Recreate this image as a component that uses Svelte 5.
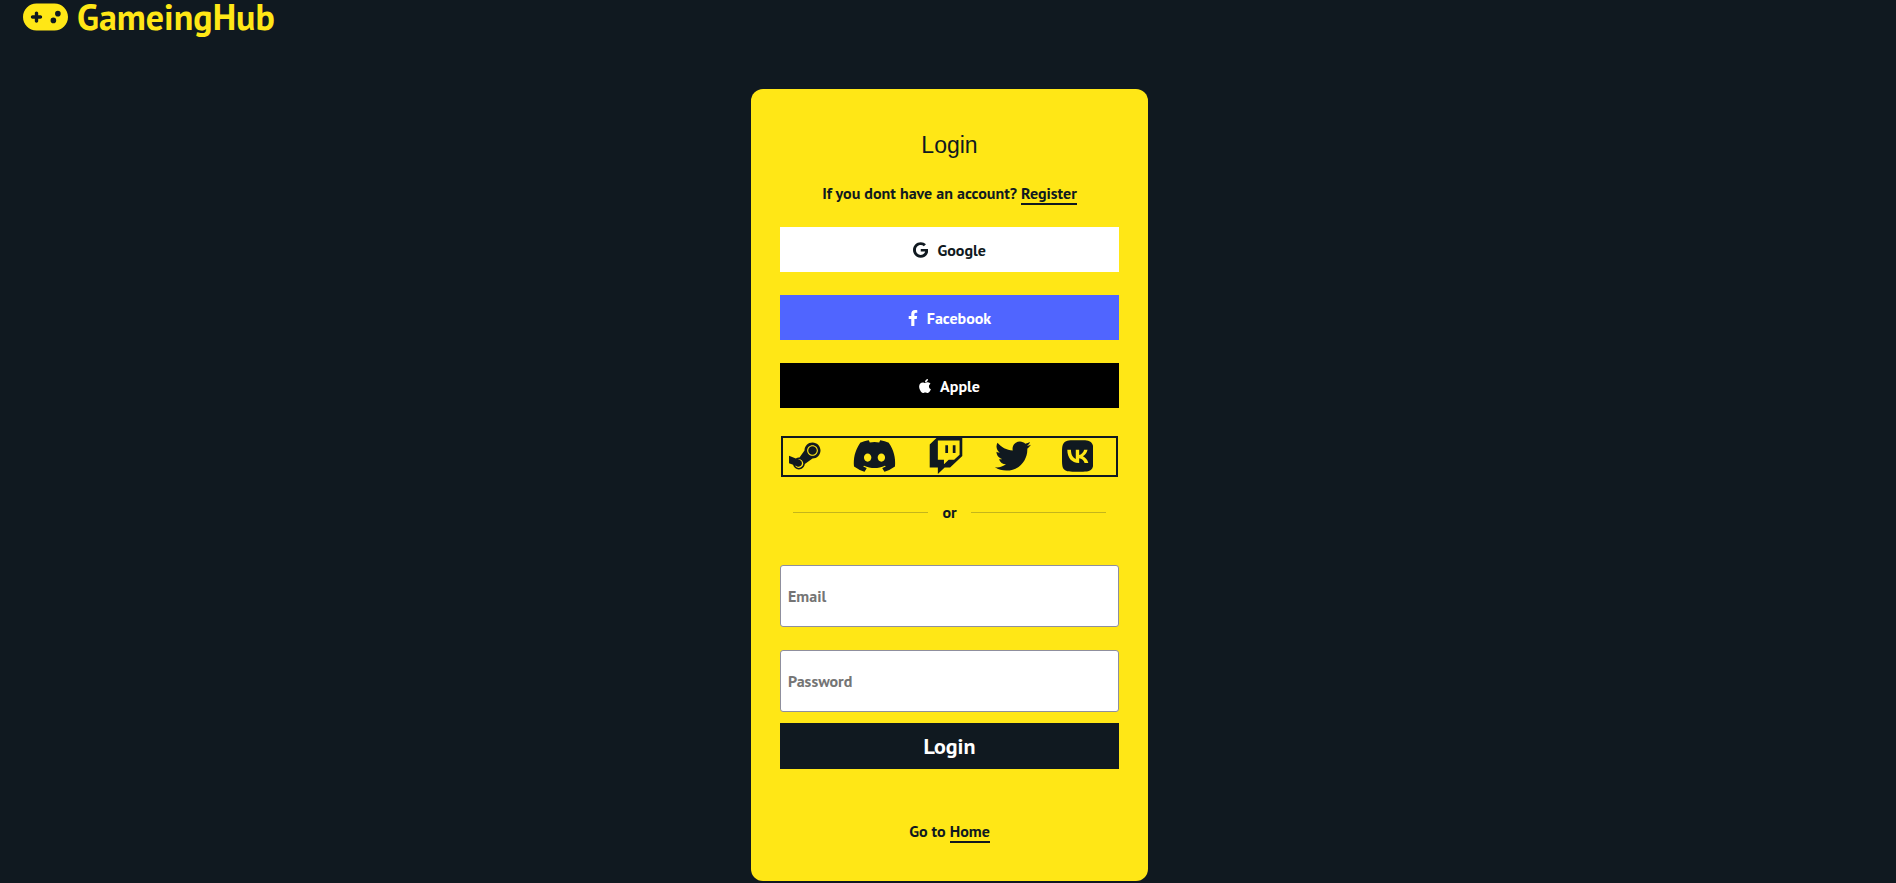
<script>
  const socials = [
    { name: 'Steam', width: 448, path: 'M395.5 177.5c0 33.8-27.5 61-61 61-33.8 0-61-27.3-61-61s27.3-61 61-61c33.5 0 61 27.2 61 61zm52.5.2c0 63-51 113.8-113.7 113.8L225 371.3c-4 43-40.5 76.8-84.5 76.8-40.5 0-74.7-28.8-83-67L0 358V250.7L97.2 290c15.1-9.2 32.2-13.3 52-11.5l71-101.7c.5-62.3 51.5-112.8 114-112.8C397 64 448 115 448 177.7zM203 363c0-34.7-27.8-62.5-62.5-62.5-4.5 0-9 .5-13.5 1.5l26 10.5c25.5 10.2 38 39 27.7 64.5-10.2 25.5-39.2 38-64.7 27.5-10.2-4-20.5-8.3-30.7-12.2 10.5 19.7 31.2 33.2 55.2 33.2 34.7 0 62.5-27.8 62.5-62.5zm207.5-185.3c0-42-34.3-76.2-76.2-76.2-42.3 0-76.5 34.2-76.5 76.2 0 42.2 34.3 76.2 76.5 76.2 41.9.1 76.2-33.9 76.2-76.2z' },
    { name: 'Discord', width: 640, path: 'M524.531,69.836a1.5,1.5,0,0,0-.764-.7A485.065,485.065,0,0,0,404.081,32.03a1.816,1.816,0,0,0-1.923.91,337.461,337.461,0,0,0-14.9,30.6,447.848,447.848,0,0,0-134.426,0,309.541,309.541,0,0,0-15.135-30.6,1.89,1.89,0,0,0-1.924-.91A483.689,483.689,0,0,0,116.085,69.137a1.712,1.712,0,0,0-.788.676C39.068,183.651,18.186,294.69,28.43,404.354a2.016,2.016,0,0,0,.765,1.375A487.666,487.666,0,0,0,176.02,479.918a1.9,1.9,0,0,0,2.063-.676A348.2,348.2,0,0,0,208.12,430.4a1.86,1.86,0,0,0-1.019-2.588,321.173,321.173,0,0,1-45.868-21.853,1.885,1.885,0,0,1-.185-3.126c3.082-2.309,6.166-4.711,9.109-7.137a1.819,1.819,0,0,1,1.9-.256c96.229,43.917,200.41,43.917,295.5,0a1.812,1.812,0,0,1,1.924.233c2.944,2.426,6.027,4.851,9.132,7.16a1.884,1.884,0,0,1-.162,3.126,301.407,301.407,0,0,1-45.89,21.83,1.875,1.875,0,0,0-1,2.611,391.055,391.055,0,0,0,30.014,48.815,1.864,1.864,0,0,0,2.063.7A486.048,486.048,0,0,0,610.7,405.729a1.882,1.882,0,0,0,.765-1.352C623.729,277.594,590.933,167.465,524.531,69.836ZM222.491,337.58c-28.972,0-52.844-26.587-52.844-59.239S193.056,219.1,222.491,219.1c29.665,0,53.306,26.82,52.843,59.239C275.334,310.993,251.924,337.58,222.491,337.58Zm195.38,0c-28.971,0-52.843-26.587-52.843-59.239S388.437,219.1,417.871,219.1c29.667,0,53.307,26.82,52.844,59.239C470.715,310.993,447.538,337.58,417.871,337.58Z' },
    { name: 'Twitch', width: 512, path: 'M391.17,103.47H352.54v109.7h38.63ZM285,103H246.37V212.75H285ZM120.83,0,24.31,91.42V420.58H140.14V512l96.53-91.42h77.25L487.69,256V0ZM449.07,237.75l-77.22,73.12H294.61l-67.6,64v-64H140.14V36.58H449.07Z' },
    { name: 'Twitter', width: 512, path: 'M459.37 151.716c.325 4.548.325 9.097.325 13.645 0 138.72-105.583 298.558-298.558 298.558-59.452 0-114.68-17.219-161.137-47.106 8.447.974 16.568 1.299 25.34 1.299 49.055 0 94.213-16.568 130.274-44.832-46.132-.975-84.792-31.188-98.112-72.772 6.498.974 12.995 1.624 19.818 1.624 9.421 0 18.843-1.3 27.614-3.573-48.081-9.747-84.143-51.98-84.143-102.985v-1.299c13.969 7.797 30.214 12.67 47.431 13.319-28.264-18.843-46.781-51.005-46.781-87.391 0-19.492 5.197-37.36 14.294-52.954 51.655 63.675 129.3 105.258 216.365 109.807-1.624-7.797-2.599-15.918-2.599-24.04 0-57.828 46.782-104.934 104.934-104.934 30.213 0 57.502 12.67 76.67 33.137 23.715-4.548 46.456-13.32 66.599-25.34-7.798 24.366-24.366 44.833-46.132 57.827 21.117-2.273 41.584-8.122 60.426-16.243-14.292 20.791-32.161 39.308-52.628 54.253z' },
    { name: 'VK', width: 448, path: 'M31.4907 63.4907C0 94.9813 0 145.671 0 247.04V264.96C0 366.329 0 417.019 31.4907 448.509C62.9813 480 113.671 480 215.04 480H232.96C334.329 480 385.019 480 416.509 448.509C448 417.019 448 366.329 448 264.96V247.04C448 145.671 448 94.9813 416.509 63.4907C385.019 32 334.329 32 232.96 32H215.04C113.671 32 62.9813 32 31.4907 63.4907ZM75.6 168.267H126.747C128.427 253.76 166.133 289.973 196 297.44V168.267H244.16V242C273.653 238.827 304.64 205.227 315.093 168.267H363.253C359.313 187.435 351.46 205.583 340.186 221.579C328.913 237.574 314.461 251.071 297.733 261.227C316.41 270.499 332.907 283.63 346.132 299.751C359.357 315.873 369.01 334.618 374.453 354.747H321.44C316.555 337.262 306.614 321.61 292.865 309.754C279.117 297.899 262.173 290.368 244.16 288.107V354.747H238.373C136.267 354.747 78.0267 284.747 75.6 168.267Z' }
  ];

  const providers = [
    { name: 'Google', width: 488, path: 'M488 261.8C488 403.3 391.1 504 248 504 110.8 504 0 393.2 0 256S110.8 8 248 8c66.8 0 123 24.5 166.3 64.9l-67.5 64.9C258.5 52.6 94.3 116.6 94.3 256c0 86.5 69.1 156.6 153.7 156.6 98.2 0 135-70.4 140.8-106.9H248v-85.3h236.1c2.3 12.7 3.9 24.9 3.9 41.4z' },
    { name: 'Facebook', width: 320, path: 'M279.14 288l14.22-92.66h-88.91v-60.13c0-25.35 12.42-50.06 52.24-50.06h40.42V6.26S260.43 0 225.36 0c-73.22 0-121.08 44.38-121.08 124.72v70.62H22.89V288h81.39v224h100.17V288z' },
    { name: 'Apple', width: 384, path: 'M318.7 268.7c-.2-36.7 16.4-64.4 50-84.8-18.8-26.9-47.2-41.7-84.7-44.6-35.5-2.8-74.3 20.7-88.5 20.7-15 0-49.4-19.7-76.4-19.7C63.3 141.2 4 184.8 4 273.5q0 39.3 14.4 81.2c12.8 36.7 59 126.7 107.2 125.2 25.2-.6 43-17.9 75.8-17.9 31.8 0 48.3 17.9 76.4 17.9 48.6-.7 90.4-82.5 102.6-119.3-65.2-30.7-61.7-90-61.7-91.9zm-56.6-164.2c27.3-32.4 24.8-61.9 24-72.5-24.1 1.4-52 16.4-67.9 34.9-17.5 19.8-27.8 44.3-25.6 71.9 26.1 2 49.9-11.4 69.5-34.3z' }
  ];
</script>

<header>
  <a class="brand" href="#home">
    <svg viewBox="0 0 640 512" aria-hidden="true"><path d="M192 64C86 64 0 150 0 256S86 448 192 448H448c106 0 192-86 192-192s-86-192-192-192H192zM496 168a40 40 0 1 1 0 80 40 40 0 1 1 0-80zM392 304a40 40 0 1 1 80 0 40 40 0 1 1 -80 0zM168 200c0-13.3 10.7-24 24-24s24 10.7 24 24v32h32c13.3 0 24 10.7 24 24s-10.7 24-24 24H216v32c0 13.3-10.7 24-24 24s-24-10.7-24-24V280H136c-13.3 0-24-10.7-24-24s10.7-24 24-24h32V200z" /></svg>
    <span>GameingHub</span>
  </a>
</header>

<div class="page">
  <main>
    <h1>Login</h1>
    <p>If you dont have an account? <a href="#register">Register</a></p>

    <div class="providers">
      {#each providers as p}
        <button type="button" class={p.name.toLowerCase()}>
          <svg viewBox="0 0 {p.width} 512" aria-hidden="true"><path d={p.path} /></svg>
          {p.name}
        </button>
      {/each}
    </div>

    <nav class="socials">
      {#each socials as s}
        <a href="#{s.name.toLowerCase()}" aria-label={s.name}>
          <svg viewBox="0 0 {s.width} 512" aria-hidden="true"><path d={s.path} /></svg>
        </a>
      {/each}
    </nav>

    <div class="divider">or</div>

    <form onsubmit={(e) => e.preventDefault()}>
      <input type="email" placeholder="Email" aria-label="Email" />
      <input type="password" placeholder="Password" aria-label="Password" />
      <button type="submit">Login</button>
    </form>

    <p class="home">Go to <a href="#home">Home</a></p>
  </main>
</div>

<style>
  :global(body) {
    background: #101920;
    color: #101920;
    font: 700 16px/20px "PT Sans", "Open Sans", sans-serif;
  }
  svg {
    display: block;
    fill: currentColor;
  }
  header {
    display: flex;
    height: 34px;
    padding-left: 23px;
  }
  .brand {
    display: flex;
    align-items: center;
    gap: 9px;
    color: #ffe716;
    font-size: 36px;
    line-height: 34px;
    text-decoration: none;
  }
  .brand svg {
    height: 36px;
  }
  .page {
    padding: 55px 0 2px 3px;
  }
  main {
    box-sizing: border-box;
    width: 397px;
    max-width: 100%;
    margin: 0 auto;
    padding: 40px 29px 38px;
    border-radius: 12px;
    background: #ffe716;
  }
  h1 {
    margin: 0 0 22px;
    font: 400 23px/32px "Liberation Sans", sans-serif;
    text-align: center;
  }
  p {
    margin: 0;
    text-align: center;
  }
  p a {
    display: inline-block;
    border-bottom: 2px solid #101920;
    color: inherit;
    text-decoration: none;
  }
  button {
    display: flex;
    align-items: center;
    justify-content: center;
    gap: 9px;
    width: 100%;
    height: 45px;
    padding: 0;
    border: 0;
    font: inherit;
    cursor: pointer;
  }
  button svg {
    height: 16px;
  }
  .providers {
    display: grid;
    gap: 23px;
    margin: 22px 0 28px;
  }
  .google {
    background: #fff;
    color: #101920;
  }
  .facebook {
    background: #5065ff;
    color: #fff;
  }
  .apple {
    background: #000;
    color: #fff;
  }
  .socials {
    display: flex;
    align-items: flex-start;
    gap: 31px;
    height: 37px;
    margin: 0 1px;
    padding-left: 6px;
    border: 2px solid #101920;
  }
  .socials a {
    color: inherit;
  }
  .socials svg {
    height: 36px;
  }
  .divider {
    display: flex;
    align-items: center;
    gap: 14px;
    margin: 25px 13px 43px;
  }
  .divider::before,
  .divider::after {
    content: "";
    flex: 1;
    height: 1px;
    background: #c4b51c;
  }
  form {
    display: grid;
  }
  input {
    box-sizing: border-box;
    width: 100%;
    height: 62px;
    margin-bottom: 23px;
    padding: 0 7px;
    border: 1px solid #8f8f9d;
    border-radius: 3px;
    background: #fff;
    color: #101920;
    font: inherit;
  }
  input::placeholder {
    color: #757575;
    opacity: 1;
  }
  input[type="password"] {
    margin-bottom: 11px;
  }
  form button {
    height: 46px;
    background: #101920;
    color: #fff;
    font-size: 22px;
  }
  .home {
    margin-top: 52px;
  }
</style>
